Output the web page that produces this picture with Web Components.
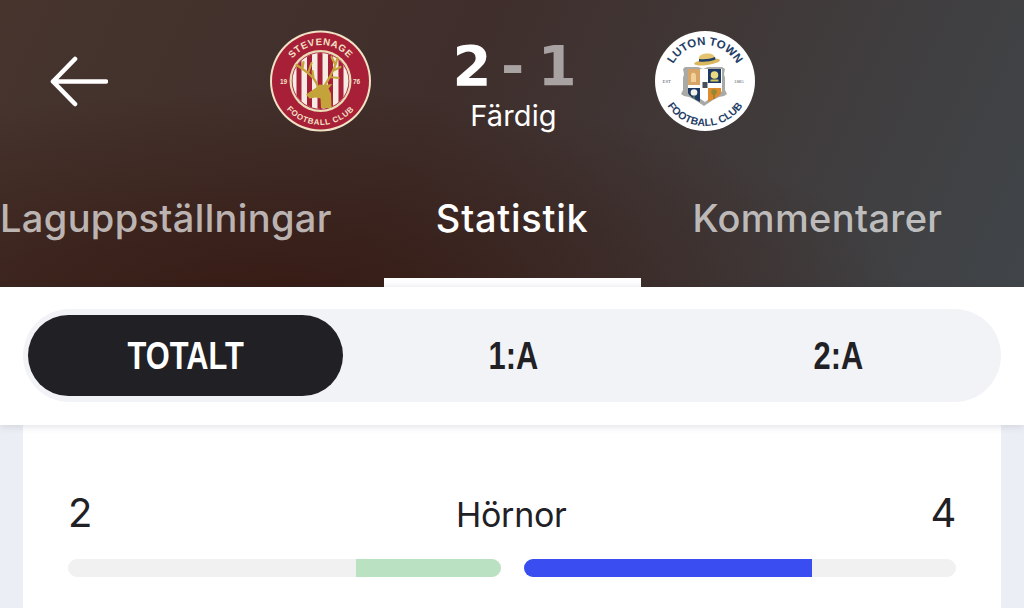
<!DOCTYPE html>
<html lang="sv">
<head>
<meta charset="utf-8">
<title>Stevenage - Luton</title>
<style>
    html, body { margin: 0; height: 100%; overflow: hidden; background: #eceef5; }
    body { font-family: "Inter", "Liberation Sans", sans-serif; }
</style>
</head>
<body>
<match-page>
    <match-header>
        <back-arrow slot="back"></back-arrow>
        <stevenage-crest slot="home"></stevenage-crest>
        <match-score slot="score" home="2" away="1" status="Färdig"></match-score>
        <luton-crest slot="away"></luton-crest>
        <match-tab slot="tabs">Laguppställningar</match-tab>
        <match-tab slot="tabs" active>Statistik</match-tab>
        <match-tab slot="tabs">Kommentarer</match-tab>
    </match-header>
    <period-bar>
        <period-option active>TOTALT</period-option>
        <period-option>1:A</period-option>
        <period-option>2:A</period-option>
    </period-bar>
    <stat-card>
        <stat-row home="2" away="4" label="Hörnor" home-pct="33.3" away-pct="66.6"></stat-row>
    </stat-card>
</match-page>

<script>
    function define(name, html, init) {
        var tpl = document.createElement('template');
        tpl.innerHTML = html;
        customElements.define(name, class extends HTMLElement {
            constructor() {
                super();
                this.attachShadow({mode: 'open'}).appendChild(tpl.content.cloneNode(true));
            }
            connectedCallback() {
                if (init) init(this, this.shadowRoot);
            }
        });
    }

    define('match-page', `
        <style>
            :host { display: flex; flex-direction: column; width: 1024px; height: 608px; overflow: hidden; }
        </style>
        <slot></slot>
    `);

    define('match-header', `
        <style>
            :host {
                display: block; height: 287px; flex: none; overflow: hidden;
                background:
                    radial-gradient(ellipse 640px 210px at 270px 300px, rgba(52,22,14,.8), rgba(52,22,14,0)),
                    linear-gradient(115deg, #46342d 0%, #3f2e2b 42%, #403b3b 72%, #404549 100%);
            }
            .top { display: grid; grid-template-columns: 1fr 485px 1fr; height: 162px; align-items: start; }
            .back { padding: 56px 0 0 50px; }
            .teams { display: flex; justify-content: space-between; padding-top: 30px; }
            .tabs { display: flex; height: 125px; margin-left: -52px; }
        </style>
        <div class="top">
            <div class="back"><slot name="back"></slot></div>
            <div class="teams">
                <slot name="home"></slot>
                <slot name="score"></slot>
                <slot name="away"></slot>
            </div>
        </div>
        <div class="tabs"><slot name="tabs"></slot></div>
    `);

    define('back-arrow', `
        <style>:host { display: block; width: 58px; height: 52px; }</style>
        <svg width="58" height="52" viewBox="0 0 58 52" fill="none" stroke="#fff" stroke-width="4.6" stroke-linecap="round" stroke-linejoin="round">
            <path d="M56 25.500H3M25 3 3 25.500 25 48"/>
        </svg>
    `);

    define('match-score', `
        <style>
            :host { display: block; width: 160px; text-align: center; color: #fff; }
            .score { font: 700 56px/60px "DejaVu Sans", sans-serif; margin-top: 6px; padding-left: 4px; white-space: nowrap; }
            .dim { color: #a9a2a2; }
            .status { font: 400 29px/36px "Inter", sans-serif; letter-spacing: .1px; margin-top: 2px; padding-left: 2px; }
        </style>
        <div class="score"><span id="h"></span><span style="word-spacing:-10px"> </span><span class="dim">-<span style="word-spacing:-6px"> </span><span id="a"></span></span></div>
        <div class="status" id="s"></div>
    `, function (el, root) {
        root.getElementById('h').textContent = el.getAttribute('home');
        root.getElementById('a').textContent = el.getAttribute('away');
        root.getElementById('s').textContent = el.getAttribute('status');
    });

    define('stevenage-crest', `
        <style>:host { display: block; width: 101px; height: 102px; }</style>
        <svg width="101" height="102" viewBox="0.500 0 101 102">
            <defs>
                <path id="st-top" d="M15 51a36 36 0 0 1 72 0"/>
                <path id="st-bot" d="M7 51a44 44 0 0 0 88 0"/>
                <clipPath id="st-in"><circle cx="51" cy="51" r="28"/></clipPath>
            </defs>
            <circle cx="51" cy="51" r="50.500" fill="#f1e2c6"/>
            <circle cx="51" cy="51" r="48.500" fill="#a81f38"/>
            <circle cx="51" cy="51" r="31" fill="#e9dcb6"/>
            <circle cx="51" cy="51" r="28.800" fill="#a81f38"/>
            <g clip-path="url(#st-in)">
                <rect x="20" y="20" width="62" height="62" fill="#f6ece4"/>
                <path d="M27 20h5v62h-5zM37.500 20h5v62h-5zM48 20h5v62h-5zM58.500 20h5v62h-5zM69 20h5v62h-5z" fill="#a81f38"/>
            </g>
            <g fill="none" stroke="#c3a33a" stroke-width="2.200" stroke-linecap="round" stroke-linejoin="round">
                <path d="M48 56C46 48 38 42 27 35M33 38l1-6M39 42l3-9M44 48l-1-7"/>
                <path d="M55 56C59 49 65 41 68 28M61 47l8 1M65 40l6-3M66 35l-4-8"/>
            </g>
            <path d="M36.500 64.500 46 58l4-3.500 5 .5 8-1-4 4.500 2.500 5L62 78l-10.500 0-.5-9.500-5-1-6 1z" fill="#c3a33a"/>
            <g fill="#f1e2c6" font-family="'Liberation Sans', sans-serif" font-weight="700">
                <text font-size="9.600" letter-spacing=".6" text-anchor="middle"><textPath href="#st-top" startOffset="50%">STEVENAGE</textPath></text>
                <text font-size="8" letter-spacing=".7" text-anchor="middle"><textPath href="#st-bot" startOffset="50%">FOOTBALL CLUB</textPath></text>
                <text font-size="6.500" x="10.500" y="53.500">19</text>
                <text font-size="6.500" x="83.500" y="53.500">76</text>
            </g>
        </svg>
    `);

    define('luton-crest', `
        <style>:host { display: block; width: 100px; height: 102px; }</style>
        <svg width="100" height="102" viewBox="0 0 100 102">
            <defs>
                <path id="lu-top" d="M14 51a36 36 0 0 1 72 0"/>
                <path id="lu-bot" d="M5 51a45 45 0 0 0 90 0"/>
            </defs>
            <circle cx="50" cy="51" r="50" fill="#fff"/>
            <g fill="#1f3d66" font-family="'Liberation Sans', sans-serif" font-weight="700">
                <text font-size="11.500" text-anchor="middle"><textPath href="#lu-top" startOffset="50%">LUTON TOWN</textPath></text>
                <text font-size="10.500" text-anchor="middle"><textPath href="#lu-bot" startOffset="50%">FOOTBALL CLUB</textPath></text>
            </g>
            <g fill="#555b66" font-family="'Liberation Serif', serif" font-size="4.800">
                <text x="7.500" y="53">EST</text>
                <text x="79" y="53">1885</text>
            </g>
            <path d="M30 37h13l5 2 5-2h14l3 2-1 5 1 4v12l2 4-3 2-5 1-6 3-6 4-3 2-3-2-6-4-6-3-5-1-3-2 2-4V48l1-4-1-5z" fill="#a9aaa6"/>
            <path d="M33 39h34v22c-3 4-11 6-17 11-6-5-14-7-17-11z" fill="#fff"/>
            <path d="M33 39h12v16H33z" fill="#d7a566"/>
            <path d="M53 39h13v14H53z" fill="#1c3a63"/>
            <path d="M33 58h12v14c-5-3-10-5-12-9z" fill="#1c3a63"/>
            <path d="M53 58h13v5c-2 4-8 6-13 9z" fill="#e08a2e"/>
            <path d="M37 43c3-1 4 1 4 3v6h-5v-6c0-1 0-2 1-3z" fill="#f3d09a"/>
            <circle cx="59.500" cy="45" r="3.800" fill="#eadb82"/>
            <path d="M55.500 49.500h8v2h-8z" fill="#d6c35b"/>
            <circle cx="39" cy="62.500" r="3.300" fill="#f2f2ee"/>
            <path d="M38.500 65h1v4h-1z" fill="#7fa06b"/>
            <circle cx="59" cy="62" r="2.800" fill="#8f8a35"/>
            <path d="M58.500 64h1v5h-1z" fill="#6d7a35"/>
            <path d="M47.500 52h5v6h-5z" fill="#4a4f57"/>
            <ellipse cx="52" cy="32" rx="13" ry="3" fill="#d9b860" transform="rotate(-8 52 32)"/>
            <path d="M44 31c-1-5 2-7 7-7.500s9 1 9 5z" fill="#e4c46e"/>
            <path d="M44 29c6 .5 11 0 16-2l.500 2.500c-5 2-11 2.500-16.500 2z" fill="#1f3d66"/>
        </svg>
    `);

    define('match-tab', `
        <style>
            :host {
                display: block; flex: none; padding: 33px 52px 0; white-space: nowrap;
                font: 500 38px/46px "Inter", sans-serif; letter-spacing: .35px;
                color: rgba(255,255,255,.68);
            }
            :host([active]) { color: #fff; letter-spacing: .75px; box-shadow: inset 0 -9px 0 #fff; }
        </style>
        <slot></slot>
    `);

    define('period-bar', `
        <style>
            :host {
                display: block; flex: none; position: relative; z-index: 1; height: 138px; box-sizing: border-box;
                padding: 22px 23px 23px; background: #fff; box-shadow: 0 1px 8px rgba(40,50,70,.16);
            }
            .track {
                display: grid; grid-template-columns: 315px 340px 1fr; height: 93px; box-sizing: border-box;
                padding: 6px 7px 6px 5px; border-radius: 47px; background: #f2f3f7;
            }
        </style>
        <div class="track"><slot></slot></div>
    `);

    define('period-option', `
        <style>
            :host {
                display: flex; align-items: center; justify-content: center; border-radius: 41px;
                font: 700 39px/1 "Liberation Sans", sans-serif; color: #212125;
            }
            :host([active]) { background: #212125; color: #fff; }
            span { display: inline-block; transform: scaleX(.79); }
        </style>
        <span><slot></slot></span>
    `);

    define('stat-card', `
        <style>
            :host { display: block; flex: 1; margin: 0 23px; padding: 0 45px; background: #fff; }
        </style>
        <slot></slot>
    `);

    define('stat-row', `
        <style>
            :host { display: block; padding-top: 66px; color: #212125; }
            .line { display: flex; justify-content: space-between; align-items: baseline; height: 44px; font: 400 34px/44px "Inter", sans-serif; letter-spacing: -.3px; }
            .num { font-size: 40px; }
            .bars { display: grid; grid-template-columns: 1fr 1fr; column-gap: 23px; margin-top: 24px; }
            .bar { display: flex; height: 18px; border-radius: 9px; background: #f1f1f2; overflow: hidden; }
            .home { justify-content: flex-end; }
            .fill { height: 100%; }
            .home .fill { background: #b9e1c2; }
            .away .fill { background: #394df0; }
        </style>
        <div class="line"><span class="num" id="h"></span><span id="l"></span><span class="num" id="a"></span></div>
        <div class="bars">
            <div class="bar home"><div class="fill" id="hf"></div></div>
            <div class="bar away"><div class="fill" id="af"></div></div>
        </div>
    `, function (el, root) {
        root.getElementById('h').textContent = el.getAttribute('home');
        root.getElementById('a').textContent = el.getAttribute('away');
        root.getElementById('l').textContent = el.getAttribute('label');
        root.getElementById('hf').style.width = el.getAttribute('home-pct') + '%';
        root.getElementById('af').style.width = el.getAttribute('away-pct') + '%';
    });
</script>
</body>
</html>
